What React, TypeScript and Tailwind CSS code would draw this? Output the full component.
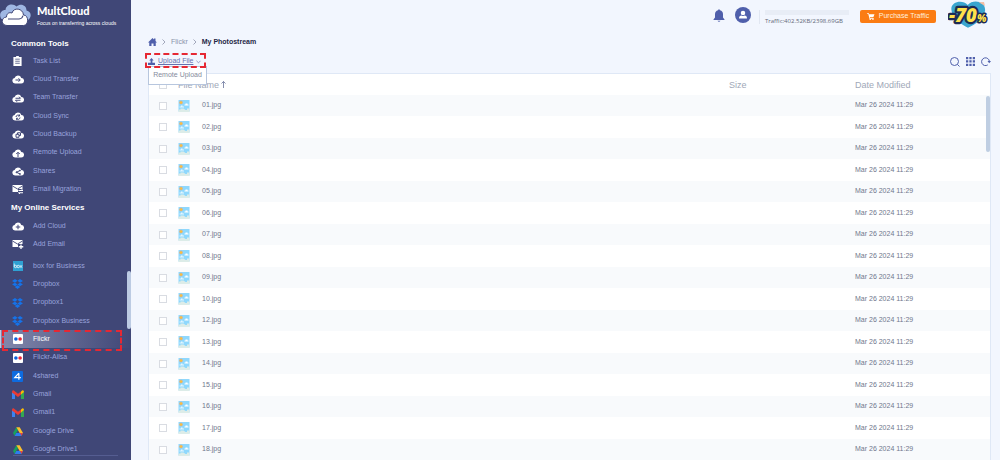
import type { ReactNode } from "react";

const INK = "#404777";

function CloudIcon({ children }: { children?: ReactNode }) {
  return (
    <svg viewBox="0 0 24 20" className="h-[10px] w-[12px]" aria-hidden="true">
      <path
        d="M6 19a5.500 5.500 0 0 1-.8-10.900A7 7 0 0 1 18.600 8 5.500 5.500 0 0 1 18.500 19Z"
        fill="#fff"
      />
      <g fill="none" stroke={INK} strokeWidth="2">
        {children}
      </g>
    </svg>
  );
}

function MailIcon({ plus }: { plus?: boolean }) {
  return (
    <svg viewBox="0 0 24 20" className="h-[10px] w-[12px]" aria-hidden="true">
      <path d="M1 2h20v8h-9v6H1Z" fill="#fff" />
      <path d="M1 4l10 6 10-6" fill="none" stroke={INK} strokeWidth="1.800" />
      {plus ? (
        <path d="M18 11v9M13.500 15.500h9" stroke="#fff" strokeWidth="2.600" />
      ) : (
        <path d="M13 13h9l-3-2.500M22 17.500h-9l3 2.500" fill="none" stroke="#fff" strokeWidth="2" />
      )}
    </svg>
  );
}

function TaskIcon() {
  return (
    <svg viewBox="0 0 20 22" className="h-[10px] w-[11px]" aria-hidden="true">
      <path d="M1 2h6V0h6v2h6v20H1Z" fill="#fff" />
      <path d="M5 7h10M5 11.500h10M5 16h10" stroke={INK} strokeWidth="1.700" />
    </svg>
  );
}

function BoxIcon() {
  return (
    <svg viewBox="0 0 20 20" className="size-[10px]" aria-hidden="true">
      <rect width="20" height="20" fill="#2fa1d3" />
      <g fill="none" stroke="#fff" strokeWidth="1.500">
        <path d="M2.500 5v6" />
        <circle cx="5" cy="11" r="2.400" />
        <circle cx="10.500" cy="11" r="2.400" />
        <path d="M14 8.500l4 5M18 8.500l-4 5" />
      </g>
    </svg>
  );
}

function DropboxIcon() {
  return (
    <svg viewBox="0 0 24 22" className="h-[10px] w-[11px]" aria-hidden="true">
      <path
        d="M6.500 0l5.500 4-5.500 4L0 4.500ZM17.500 0L24 4.500 17.500 8 12 4ZM6.500 8l5.500 4-5.500 4L0 11.500ZM17.500 8l6.500 3.500-6.500 4.500-5.500-4ZM12 13.500l6 4-6 4.500-6-4.500Z"
        fill="#1573ea"
      />
    </svg>
  );
}

function FlickrIcon() {
  return (
    <svg viewBox="0 0 20 20" className="size-[10px]" aria-hidden="true">
      <rect width="20" height="20" rx="2" fill="#fff" />
      <circle cx="5.800" cy="10" r="3.600" fill="#0b62dc" />
      <circle cx="14.200" cy="10" r="3.600" fill="#ee2737" />
    </svg>
  );
}

function FourSharedIcon() {
  return (
    <svg viewBox="0 0 20 20" className="size-[11px]" aria-hidden="true">
      <rect width="20" height="20" rx="2" fill="#0d6be0" />
      <path d="M12.500 4L5 12h11M12.500 4v12" fill="none" stroke="#fff" strokeWidth="2.200" />
    </svg>
  );
}

function GmailIcon() {
  return (
    <svg viewBox="0 0 24 18" className="h-[9px] w-[12px]" aria-hidden="true">
      <path d="M0 3v15h6V7Z" fill="#3b82f0" />
      <path d="M24 3v15h-6V7Z" fill="#34a853" />
      <path d="M18 3l3-2.500Q24 0 24 4l-6 5Z" fill="#fbbc04" />
      <path d="M0 4Q0 0 3 .500L12 7.500 18 3v6l-6 5L0 5Z" fill="#ea3a33" />
    </svg>
  );
}

function DriveIcon() {
  return (
    <svg viewBox="0 0 24 21" className="h-[9px] w-[10px]" aria-hidden="true">
      <path d="M8 0L0 14l4 7 8-14Z" fill="#18a05d" />
      <path d="M8 0h8l8 14h-8Z" fill="#fbc02d" />
      <path d="M8 14h16l-4 7H4Z" fill="#2f7ded" />
      <path d="M17 14h7l-4 7Z" fill="#ea4335" />
    </svg>
  );
}

function PhotoIcon() {
  return (
    <svg viewBox="0 0 24 24" className="size-[12px] shrink-0" aria-hidden="true">
      <rect x="1" width="22" height="23" fill="#8fd8fd" />
      <path d="M13 9h2V7h4v2h2v2h-8Z" fill="#fff" />
      <path d="M3 15v-2h3v-2h3v2h3v2Z" fill="#e4f6ff" />
      <path d="M1 19h4v-2h6l4 3h3v-3h5v7H1Z" fill="#dcece8" />
      <circle cx="6" cy="5" r="3" fill="#fbc23c" stroke="#d9a58e" />
    </svg>
  );
}

function LogoIcon() {
  return (
    <svg viewBox="0 0 64 54" className="h-[27px] w-[32px] shrink-0" aria-hidden="true">
      <path
        d="M3 38C-4 28 4 19 11 20 12 8 27 6 33 13c9-7 20-2 20 8 10 2 11 13 3 19Z"
        fill="#9fb7e3"
      />
      <path
        d="M14 51C2 51 1 35 13 34c0-7 5-10 11-8 3-12 22-10 23 4 11 0 11 21 0 21Z"
        fill="#fff"
        stroke={INK}
        strokeWidth="2"
      />
      <path d="M16 38h22q7-1 8-7" fill="none" stroke={INK} strokeWidth="2.200" />
    </svg>
  );
}

function DiscountBadge() {
  return (
    <svg viewBox="0 0 120 84" className="h-[28px] w-[40px]" role="img" aria-label="-70%">
      <path
        d="M60 83C38 74 11 52 10 28 9 5 44-2 59 15 76-4 115 4 111 33c-3 22-31 42-51 50Z"
        fill="#3aa5cf"
      />
      <path d="M92 7l16-1 3 12Z" fill="#f4bda2" />
      <g
        fontFamily="'Open Sans', sans-serif"
        fontWeight="800"
        fontStyle="italic"
        fill="#ffe14b"
        stroke="#1d2b55"
        strokeLinejoin="round"
        paintOrder="stroke"
      >
        <text x="3" y="65" fontSize="56" strokeWidth="13">
          -70
        </text>
        <text x="87" y="67" fontSize="30" strokeWidth="9">
          %
        </text>
      </g>
    </svg>
  );
}

type Item = { label: string; icon: ReactNode; active?: boolean };

const tools: Item[] = [
  { label: "Task List", icon: <TaskIcon /> },
  { label: "Cloud Transfer", icon: <CloudIcon><path d="M7 12h9M13 8.500l3.500 3.500-3.500 3.500" /></CloudIcon> },
  { label: "Team Transfer", icon: <CloudIcon><path d="M7 10.500h10l-3-3M17 14.500H7l3 3" /></CloudIcon> },
  { label: "Cloud Sync", icon: <CloudIcon><path d="M8 12a4 4 0 0 1 7-2.500M16 13a4 4 0 0 1-7 2.500M15 7v3h-3M9 17.500v-3h3" /></CloudIcon> },
  { label: "Cloud Backup", icon: <CloudIcon><path d="M8 10.500h6v6H8ZM11 10.500V7.500h6V13h-3" /></CloudIcon> },
  { label: "Remote Upload", icon: <CloudIcon><path d="M12 18V9M8.500 12L12 8.500l3.500 3.500" /></CloudIcon> },
  { label: "Shares", icon: <CloudIcon><path d="M16 9l-7 3.500 7 3.500" /><circle cx="9" cy="12.500" r="1" /><circle cx="16" cy="9" r="1" /><circle cx="16" cy="16" r="1" /></CloudIcon> },
  { label: "Email Migration", icon: <MailIcon /> },
];

const adders: Item[] = [
  { label: "Add Cloud", icon: <CloudIcon><path d="M12 7.500v9M7.500 12h9" /></CloudIcon> },
  { label: "Add Email", icon: <MailIcon plus /> },
];

const services: Item[] = [
  { label: "box for Business", icon: <BoxIcon /> },
  { label: "Dropbox", icon: <DropboxIcon /> },
  { label: "Dropbox1", icon: <DropboxIcon /> },
  { label: "Dropbox Business", icon: <DropboxIcon /> },
  { label: "Flickr", icon: <FlickrIcon />, active: true },
  { label: "Flickr-Ailsa", icon: <FlickrIcon /> },
  { label: "4shared", icon: <FourSharedIcon /> },
  { label: "Gmail", icon: <GmailIcon /> },
  { label: "Gmail1", icon: <GmailIcon /> },
  { label: "Google Drive", icon: <DriveIcon /> },
  { label: "Google Drive1", icon: <DriveIcon /> },
];

const files = ["01", "02", "03", "04", "05", "06", "07", "08", "09", "10", "12", "13", "14", "15", "16", "17", "18"];

function NavList({ items }: { items: Item[] }) {
  return (
    <ul>
      {items.map((item) => (
        <li key={item.label} className="relative h-[18px] nth-[3n]:h-[19px]">
          <a
            href="#"
            aria-current={item.active ? "page" : undefined}
            className={
              item.active
                ? "flex h-full items-center gap-[9px] border-l border-[#c3c9e0] bg-linear-to-r from-[#8388ac] to-[#404777] pl-[10px] text-white"
                : "flex h-full items-center gap-[9px] pl-[11px] text-[#99a3dc]"
            }
          >
            <span className="flex w-[13px] justify-center">{item.icon}</span>
            {item.label}
          </a>
          {item.active && (
            <span className="pointer-events-none absolute top-0 right-[9px] -bottom-[3px] left-[2px] border-2 border-dashed border-[#e62833]" />
          )}
        </li>
      ))}
    </ul>
  );
}

function Sidebar() {
  return (
    <aside className="relative flex w-[131px] shrink-0 flex-col overflow-hidden bg-[#404777] text-[7px]">
      <div className="flex h-[35px] items-start">
        <LogoIcon />
        <div className="pt-[5px] pl-[5px] whitespace-nowrap text-white">
          <div className="font-['Lato'] text-[11px] leading-[11px] font-black">MultCloud</div>
          <div className="pt-[3px] text-[5px] leading-[8px]">Focus on transferring across clouds</div>
        </div>
      </div>
      <h2 className="h-[17px] pl-[11px] text-[8px] leading-[17px] font-bold text-white">Common Tools</h2>
      <NavList items={tools} />
      <h2 className="h-[19px] pl-[11px] text-[8px] leading-[19px] font-bold text-white">My Online Services</h2>
      <NavList items={adders} />
      <nav aria-label="Services" className="min-h-0 flex-1 overflow-hidden pt-[4px]">
        <NavList items={services} />
      </nav>
      <div className="mx-[13px] mb-[4px] h-px shrink-0 bg-[#555d91]" />
      <div className="absolute top-[271px] right-0 h-[58px] w-[4px] rounded-full bg-[#bccbe3]" />
    </aside>
  );
}

function Header() {
  return (
    <header className="flex h-[34px] items-start justify-end pr-[3px]">
      <button aria-label="Notifications" className="mt-[9px] mr-[10px]">
        <svg viewBox="0 0 24 26" className="h-[13px] w-[12px]" fill="#4f5fab" aria-hidden="true">
          <path d="M12 0l2 2.500c4 1 6 4 6 8V17l3 4v1H1v-1l3-4v-6.500c0-4 2-7 6-8ZM9 23.500h6q-3 4-6 0Z" />
        </svg>
      </button>
      <button aria-label="Account" className="mt-[7px] mr-[8px]">
        <svg viewBox="0 0 32 32" className="size-[16px]" aria-hidden="true">
          <circle cx="16" cy="16" r="16" fill="#4f5fab" />
          <circle cx="16" cy="12" r="4.500" fill="#fff" />
          <path d="M8 23q0-6 5-6 3 2 6 0 5 0 5 6Z" fill="#fff" />
        </svg>
      </button>
      <div className="mt-[10px] mr-[5px] h-[14px] w-px bg-[#e1e7f2]" />
      <div className="mt-[10px] mr-[11px] w-[84px]">
        <div className="h-[5px] bg-[#e8edf6]" />
        <p className="pt-[1px] font-['Open_Sans'] text-[6px] leading-[10px] whitespace-nowrap text-[#626878]">
          Traffic:402.52KB/2398.69GB
        </p>
      </div>
      <button className="mt-[10px] mr-[12px] flex h-[13px] w-[76px] items-center justify-center gap-[4px] rounded-[2px] bg-[#fb7c13] text-[7px] whitespace-nowrap text-[#fff0df]">
        <svg viewBox="0 0 20 18" className="h-[7px] w-[8px]" fill="#fff" aria-hidden="true">
          <path d="M0 0h4l1 3h14l-3 8H7l.500 2H17v1.500H6L3 2H0Z" />
          <circle cx="8" cy="16" r="2" />
          <circle cx="15" cy="16" r="2" />
        </svg>
        Purchase Traffic
      </button>
      <DiscountBadge />
    </header>
  );
}

function Chevron() {
  return (
    <svg viewBox="0 0 8 12" className="h-[6px] w-[4px]" aria-hidden="true">
      <path d="M1 1l5 5-5 5" fill="none" stroke="#8c93aa" strokeWidth="1.600" />
    </svg>
  );
}

function Toolbar() {
  return (
    <div className="relative flex h-[23px] items-center justify-between">
      <div className="relative -ml-[3px]">
        <button className="relative flex h-[13px] w-[61px] items-center gap-[3px] pl-[3px] text-[7px] whitespace-nowrap text-[#6671ae]">
          <svg viewBox="0 0 16 16" className="size-[7px] shrink-0" fill="#4f5fab" aria-hidden="true">
            <path d="M8 0l5 5.500h-3V11H6V5.500H3ZM0 11h16v5H0Z" />
          </svg>
          <span className="underline">Upload File</span>
          <svg viewBox="0 0 12 8" className="h-[4px] w-[5px] shrink-0" aria-hidden="true">
            <path d="M1 1l5 5 5-5" fill="none" stroke="#7782b8" strokeWidth="1.800" />
          </svg>
        </button>
        <button className="absolute top-[11px] left-[3px] z-10 h-[19px] w-[59px] border border-[#b7c6de] bg-white text-[7px] whitespace-nowrap text-[#858b9c]">
          Remote Upload
        </button>
        <span className="pointer-events-none absolute inset-x-0 -top-[2px] bottom-0 z-20 border-2 border-dashed border-[#e62833]" />
      </div>
      <div className="flex items-center gap-[6px]">
        <button aria-label="Search">
          <svg viewBox="0 0 20 20" className="size-[10px]" fill="none" stroke="#4f5fab" strokeWidth="2" aria-hidden="true">
            <circle cx="9" cy="9" r="8" />
            <path d="M15 15l4 4" />
          </svg>
        </button>
        <button aria-label="Grid view">
          <svg viewBox="0 0 18 18" className="size-[9px]" fill="#4f5fab" aria-hidden="true">
            <path d="M0 0h4.500v4.500H0ZM6.700 0h4.500v4.500H6.700ZM13.500 0H18v4.500h-4.500ZM0 6.700h4.500v4.500H0ZM6.700 6.700h4.500v4.500H6.700ZM13.500 6.700H18v4.500h-4.500ZM0 13.500h4.500V18H0ZM6.700 13.500h4.500V18H6.700ZM13.500 13.500H18V18h-4.500Z" />
          </svg>
        </button>
        <button aria-label="Refresh">
          <svg viewBox="0 0 20 18" className="h-[9px] w-[10px]" aria-hidden="true">
            <path d="M13.500 15.800A7.800 7.800 0 1 1 16.800 9" fill="none" stroke="#4f5fab" strokeWidth="2" />
            <path d="M13 8h7l-3.500 4.500Z" fill="#4f5fab" />
          </svg>
        </button>
      </div>
    </div>
  );
}

const box = "block size-[8px] appearance-none border border-[#d9dce2] bg-white";

function FileTable() {
  return (
    <div className="relative min-h-0 flex-1 overflow-hidden border border-b-0 border-[#dfe8f6] bg-white">
      <table className="w-full table-fixed text-left text-[7px] text-[#70778c]">
        <colgroup>
          <col className="w-[29px]" />
          <col />
          <col className="w-[126px]" />
          <col className="w-[135px]" />
        </colgroup>
        <thead className="text-[9px] leading-[10px] text-[#a0a8b8]">
          <tr className="h-[21px]">
            <th className="p-0 pl-[10px]">
              <input type="checkbox" aria-label="Select all" className={box} />
            </th>
            <th className="p-0 font-normal">
              <span className="flex items-center gap-[2px]">
                File Name
                <svg viewBox="0 0 10 14" className="h-[7px] w-[5px]" fill="none" stroke="#5e6993" strokeWidth="1.500" aria-hidden="true">
                  <path d="M5 14V1M1 5l4-4 4 4" />
                </svg>
              </span>
            </th>
            <th className="p-0 font-normal">Size</th>
            <th className="p-0 font-normal">Date Modified</th>
          </tr>
        </thead>
        <tbody>
          {files.map((n) => (
            <tr key={n} className="h-[22px] odd:h-[21px] odd:bg-[#f8fafc]">
              <td className="p-0 pl-[10px]">
                <input type="checkbox" aria-label={`Select ${n}.jpg`} className={box} />
              </td>
              <td className="p-0">
                <span className="flex items-center gap-[12px]">
                  <PhotoIcon />
                  {n}.jpg
                </span>
              </td>
              <td className="p-0" />
              <td className="p-0">Mar 26 2024 11:29</td>
            </tr>
          ))}
        </tbody>
      </table>
      <div className="absolute top-[22px] right-0 h-[56px] w-[4px] rounded-full bg-[#bfcee2]" />
    </div>
  );
}

export default function App() {
  return (
    <div className="flex h-screen overflow-hidden bg-[#f2f6fe] font-['Liberation_Sans',sans-serif]">
      <Sidebar />
      <main className="flex min-w-0 flex-1 flex-col pr-[9px] pl-[17px]">
        <Header />
        <nav aria-label="Breadcrumb" className="flex h-[16px] items-center gap-[5px] text-[7px] text-[#8a92aa]">
          <a href="#" aria-label="Home">
            <svg viewBox="0 0 18 16" className="h-[8px] w-[9px]" fill="#4f5fab" aria-hidden="true">
              <path d="M9 0l3 3V1h3v5l3 3h-2.500v7H11v-5H7v5H2.500V9H0Z" />
            </svg>
          </a>
          <Chevron />
          <a href="#">Flickr</a>
          <Chevron />
          <span className="font-bold text-[#1f2745]">My Photostream</span>
        </nav>
        <Toolbar />
        <FileTable />
      </main>
    </div>
  );
}
